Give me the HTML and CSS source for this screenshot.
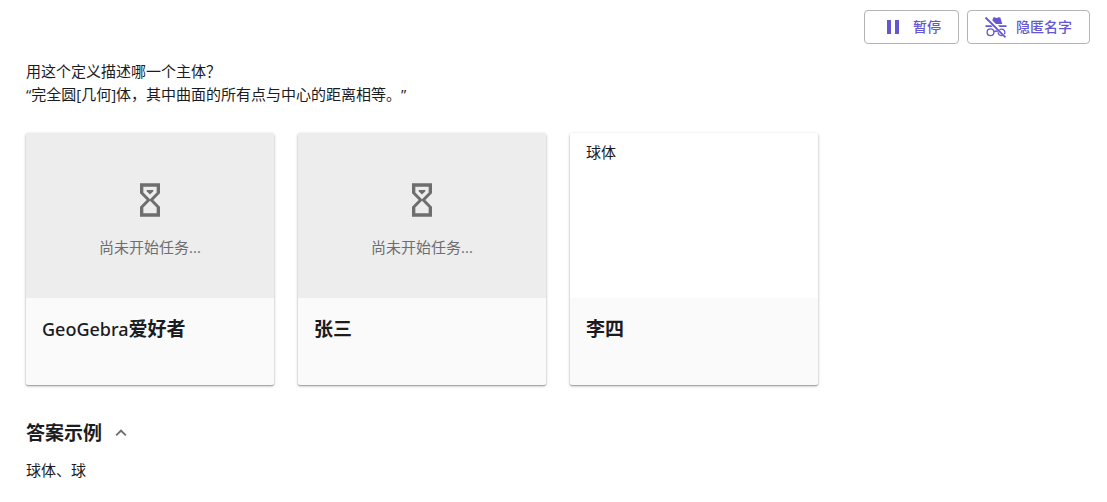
FILE: index.html
```html
<!DOCTYPE html>
<html lang="zh-CN">

<head>
    <meta charset="UTF-8">
    <meta name="viewport" content="width=device-width, initial-scale=1.0">
    <title>GeoGebra 课堂</title>
    <link rel="stylesheet" href="styles.css">
</head>

<body>
    <header class="toolbar">
        <button type="button" class="tool-button">
            <svg class="icon" viewBox="0 0 24 24" aria-hidden="true">
                <path d="M6 5h4v14H6zM14 5h4v14h-4z" />
            </svg>
            暂停
        </button>
        <button type="button" class="tool-button">
            <svg class="icon" viewBox="0 0 24 24" aria-hidden="true">
                <path d="M8.4 5.6L9 3C9.2 2.3 9.8 2 10.4 2.2L12.6 2.9L14.9 2.2C15.6 2 16.3 2.3 16.5 3L18.3 9H12zM13.8 10.3H22.5V12H15.6zM1.5 10.3H7L8.7 12H1.5z" />
                <path class="line" d="M1.5 2.5L21.5 22.3" />
                <circle class="glass" cx="6.5" cy="17.3" r="3.4" />
                <path class="glass" d="M10 17C11 16 12.5 15.7 13.7 16.7M15.5 14.7C17.5 13.2 20.9 14.6 20.9 17.3C20.9 18 20.7 18.6 20.3 19.1M14.1 17.3C14.1 19.7 16.5 21.2 18.6 20.4" />
            </svg>
            隐匿名字
        </button>
    </header>

    <main>
        <p class="question">用这个定义描述哪一个主体？<br>“完全圆[几何]体，其中曲面的所有点与中心的距离相等。”</p>

        <div class="cards">
            <article class="card">
                <div class="preview waiting">
                    <svg class="hourglass" viewBox="0 0 24 24" aria-hidden="true">
                        <path d="M6 2V8L10 12L6 16V22H18V16L14 12L18 8V2H6M16 16.5V20H8V16.5L12 12.5L16 16.5M12 11.5L8 7.5V4H16V7.5L12 11.5M10 6V6.75L12 8.75L14 6.75V6H10Z" />
                    </svg>
                    <p>尚未开始任务...</p>
                </div>
                <h2 class="name">GeoGebra<b>爱好者</b></h2>
            </article>
            <article class="card">
                <div class="preview waiting">
                    <svg class="hourglass" viewBox="0 0 24 24" aria-hidden="true">
                        <path d="M6 2V8L10 12L6 16V22H18V16L14 12L18 8V2H6M16 16.5V20H8V16.5L12 12.5L16 16.5M12 11.5L8 7.5V4H16V7.5L12 11.5M10 6V6.75L12 8.75L14 6.75V6H10Z" />
                    </svg>
                    <p>尚未开始任务...</p>
                </div>
                <h2 class="name"><b>张三</b></h2>
            </article>
            <article class="card">
                <div class="preview">
                    <p>球体</p>
                </div>
                <h2 class="name"><b>李四</b></h2>
            </article>
        </div>

        <section class="answer">
            <div class="answer-header">
                <h2>答案示例</h2>
                <button type="button" class="toggle" aria-label="收起" aria-expanded="true">
                    <svg viewBox="0 0 24 24" aria-hidden="true">
                        <path d="M7.4 15.4L12 10.8L16.6 15.4L18 14L12 8L6 14Z" />
                    </svg>
                </button>
            </div>
            <p>球体、球</p>
        </section>
    </main>
</body>

</html>
```

FILE: styles.css
```css
* {
    box-sizing: border-box;
}

body {
    margin: 0;
    background-color: #ffffff;
    color: #1c1c1f;
    font-family: "Open Sans", "Noto Sans CJK SC", sans-serif;
    font-size: 15px;
    line-height: 23px;
}

h2,
p {
    margin: 0;
}

.toolbar {
    display: flex;
    justify-content: flex-end;
    gap: 8px;
    padding: 10px 17px 0;
}

.tool-button {
    display: flex;
    align-items: center;
    gap: 8px;
    height: 34px;
    padding: 0 17px 0 16px;
    border: 1px solid #b4b4b7;
    border-radius: 4px;
    background-color: #ffffff;
    color: #6557d2;
    font-family: inherit;
    font-size: 14px;
    font-weight: 500;
    line-height: 20px;
    cursor: pointer;
}

.icon {
    width: 24px;
    height: 24px;
    fill: currentColor;
}

.line,
.glass {
    fill: none;
    stroke: currentColor;
}

.line {
    stroke-width: 1.8;
}

.glass {
    stroke-width: 1.3;
}

main {
    padding: 16px 26px;
}

.question {
    text-spacing-trim: space-all;
}

.cards {
    display: flex;
    flex-wrap: wrap;
    gap: 24px;
    margin-top: 27px;
}

.card {
    width: 248px;
    border-radius: 2px;
    background-color: #fafafa;
    box-shadow: 0 1px 3px rgba(0, 0, 0, 0.3), 0 1px 1px rgba(0, 0, 0, 0.2);
    overflow: hidden;
}

.preview {
    height: 165px;
    padding: 8px 16px;
    background-color: #ffffff;
}

.waiting {
    display: flex;
    flex-direction: column;
    align-items: center;
    justify-content: center;
    gap: 16px;
    padding-top: 16px;
    background-color: #ededed;
    color: #6e6d73;
}

.hourglass {
    width: 40px;
    height: 40px;
    fill: #6e6e6e;
}

.name {
    min-height: 87px;
    padding: 18px 16px;
    font-family: "Noto Sans", "Noto Sans CJK SC", sans-serif;
    font-size: 18px;
    font-weight: 500;
    line-height: 26px;
}

.name b {
    font-size: 19px;
    font-weight: 700;
}

.answer {
    margin-top: 34px;
}

.answer-header {
    display: flex;
    align-items: center;
    gap: 8px;
    margin-bottom: 12px;
}

.answer-header h2 {
    font-size: 19px;
    line-height: 28px;
}

.toggle {
    display: flex;
    padding: 0;
    border: none;
    background: none;
    cursor: pointer;
}

.toggle svg {
    width: 22px;
    height: 22px;
    fill: #6e6d73;
}
```
